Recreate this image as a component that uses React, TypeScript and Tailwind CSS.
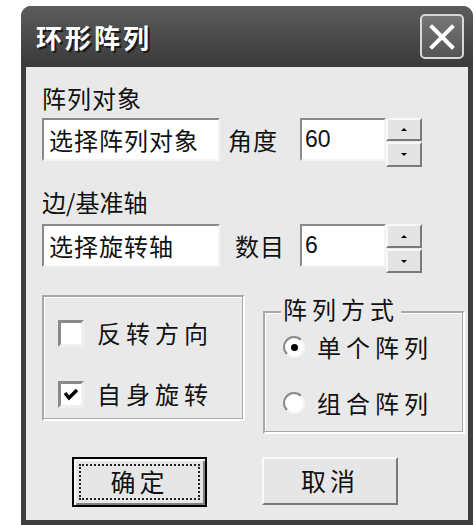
import React from "react";

const cjk = "font-['Noto_Sans_CJK_SC','Noto_Sans',sans-serif]";

function Sunken({ className, children }: { className?: string; children?: React.ReactNode }) {
  return (
    <div
      className={`border-2 border-t-[#8a8a8a] border-l-[#8a8a8a] border-b-[#f4f4f4] border-r-[#f4f4f4] bg-white ${className ?? ""}`}
    >
      {children}
    </div>
  );
}

function SpinButtons({ upH, downH }: { upH: string; downH: string }) {
  return (
    <div className="flex flex-col gap-[1px] w-[36px]">
      <div
        className={`${upH} flex items-center justify-center bg-[#e4e4e4] border-2 border-t-[#f8f8f8] border-l-[#f8f8f8] border-b-[#7a7a7a] border-r-[#7a7a7a]`}
      >
        <div className="w-0 h-0 border-l-[3px] border-r-[3px] border-b-[3px] border-l-transparent border-r-transparent border-b-black" />
      </div>
      <div
        className={`${downH} flex items-center justify-center bg-[#e4e4e4] border-2 border-t-[#f8f8f8] border-l-[#f8f8f8] border-b-[#7a7a7a] border-r-[#7a7a7a]`}
      >
        <div className="w-0 h-0 border-l-[3px] border-r-[3px] border-t-[3px] border-l-transparent border-r-transparent border-t-black" />
      </div>
    </div>
  );
}

function Checkbox({ checked }: { checked?: boolean }) {
  return (
    <div className="w-[26px] h-[27px] bg-white border-[3px] border-t-[#8a8a8a] border-l-[#8a8a8a] border-b-[#f0f0f0] border-r-[#f0f0f0] flex items-center justify-center">
      {checked && (
        <svg width="16" height="14" viewBox="0 0 16 14">
          <path d="M2 6 L6 11 L14 3" fill="none" stroke="#000" strokeWidth="3.5" />
        </svg>
      )}
    </div>
  );
}

function Radio({ checked }: { checked?: boolean }) {
  return (
    <div className="w-[22px] h-[22px] rounded-full bg-white border-2 border-t-[#8a8a8a] border-l-[#8a8a8a] border-b-[#f4f4f4] border-r-[#f4f4f4] flex items-center justify-center">
      {checked && <div className="w-[7px] h-[7px] rounded-full bg-black" />}
    </div>
  );
}

export default function App() {
  return (
    <div className={`w-[476px] h-[525px] bg-white pt-[6px] pl-[21px] ${cjk}`}>
      <div className="w-[452px] h-[519px] flex flex-col rounded-t-[10px] bg-[#3d3d3d] overflow-hidden">
        {/* title bar */}
        <div className="h-[61px] flex items-center justify-between pl-[15px] pr-[9px] bg-gradient-to-b from-[#5c5c5c] via-[#4b4b4b] to-[#3a3a3a]">
          <span className="text-white font-bold text-[26px] tracking-[3px] leading-none [text-shadow:2px_2px_0_#1a1a1a]">
            环形阵列
          </span>
          <div className="w-[44px] h-[45px] rounded-[5px] border-2 border-[#d8d8d8] bg-gradient-to-b from-[#777] to-[#555] flex items-center justify-center">
            <svg width="26" height="26" viewBox="0 0 26 26">
              <path d="M3 3 L23 23 M23 3 L3 23" stroke="#fff" strokeWidth="4" strokeLinecap="square" />
            </svg>
          </div>
        </div>

        {/* client area */}
        <div className="flex-1 ml-[5px] mr-[5px] mb-[5px] bg-[#e9e9e9] pl-[16px] pt-[17px] text-[#111]">
          <div className="text-[24px] leading-[28px] tracking-[1px]">阵列对象</div>
          <div className="flex items-start mt-[6px]">
            <Sunken className="w-[178px] h-[43px] flex items-center pl-[5px] text-[24px] tracking-[1px]">
              选择阵列对象
            </Sunken>
            <div className="w-[80px] h-[43px] flex items-center pl-[8px] text-[24px] tracking-[1px]">角度</div>
            <Sunken className="w-[86px] h-[43px] flex items-center pl-[3px] font-['Liberation_Sans',sans-serif] text-[23px]">
              60
            </Sunken>
            <SpinButtons upH="h-[23px]" downH="h-[25px]" />
          </div>

          <div className="mt-[21px] text-[24px] leading-[28px]">边/基准轴</div>
          <div className="flex items-start mt-[8px]">
            <Sunken className="w-[178px] h-[43px] flex items-center pl-[5px] text-[24px] tracking-[1px]">
              选择旋转轴
            </Sunken>
            <div className="w-[80px] h-[43px] flex items-center pl-[15px] text-[24px] tracking-[1px]">数目</div>
            <Sunken className="w-[86px] h-[43px] flex items-center pl-[3px] font-['Liberation_Sans',sans-serif] text-[23px]">
              6
            </Sunken>
            <SpinButtons upH="h-[24px]" downH="h-[24px]" />
          </div>

          <div className="flex items-start mt-[22px]">
            {/* left group */}
            <div className="w-[203px] h-[126px] border-2 border-t-[#a8a8a8] border-l-[#a8a8a8] border-b-white border-r-white shadow-[inset_-1px_-1px_0_#a8a8a8,inset_1px_1px_0_#fff] flex flex-col pl-[14px] pt-[22px] gap-[33px]">
              <div className="flex items-center gap-[13px] text-[24px] leading-[28px] tracking-[5px]">
                <Checkbox />
                <span>反转方向</span>
              </div>
              <div className="flex items-center gap-[13px] text-[24px] leading-[28px] tracking-[5px]">
                <Checkbox checked />
                <span>自身旋转</span>
              </div>
            </div>

            {/* right group */}
            <div className="relative ml-[18px] mt-[16px] w-[202px] h-[123px] border-2 border-t-[#a8a8a8] border-l-[#a8a8a8] border-b-white border-r-white shadow-[inset_-1px_-1px_0_#a8a8a8,inset_1px_1px_0_#fff]">
              <span className="absolute left-[16px] top-[-18px] bg-[#e9e9e9] px-[2px] text-[24px] leading-[28px] tracking-[5px]">
                阵列方式
              </span>
              <div className="flex flex-col pl-[18px] pt-[20px] gap-[28px]">
                <div className="flex items-center gap-[12px] text-[24px] leading-[28px] tracking-[5px]">
                  <Radio checked />
                  <span>单个阵列</span>
                </div>
                <div className="flex items-center gap-[12px] text-[24px] leading-[28px] tracking-[5px]">
                  <Radio />
                  <span>组合阵列</span>
                </div>
              </div>
            </div>
          </div>

          <div className="flex items-start mt-[23px] pl-[30px]">
            <div className="w-[135px] h-[50px] border-2 border-black bg-[#e6e6e6] shadow-[inset_2px_2px_0_#fafafa,inset_-2px_-2px_0_#808080] flex items-center justify-center p-[5px]">
              <div className="w-full h-full border-2 border-dotted border-[#222] flex items-center justify-center text-[25px] tracking-[4px]">
                确定
              </div>
            </div>
            <div className="ml-[55px] w-[136px] h-[48px] bg-[#e6e6e6] border-2 border-t-[#fafafa] border-l-[#fafafa] border-b-[#7a7a7a] border-r-[#7a7a7a] flex items-center justify-center text-[25px] tracking-[4px]">
              取消
            </div>
          </div>
        </div>
      </div>
    </div>
  );
}
